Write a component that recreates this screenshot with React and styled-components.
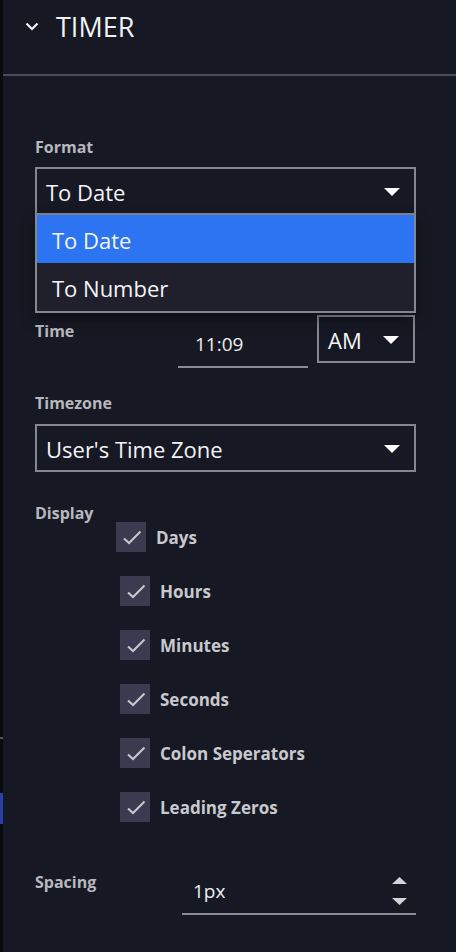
import React from "react";
import styled, { createGlobalStyle } from "styled-components";

const GlobalStyle = createGlobalStyle`
  html, body {
    margin: 0;
    padding: 0;
    background: #161823;
  }

  body {
    font-family: "Open Sans", "Noto Sans", sans-serif;
    color: #f0f0f2;
  }
`;

const Page = styled.div`
  width: 456px;
  height: 952px;
  display: flex;
  overflow: hidden;
  background: #161823;
`;

const Rail = styled.div`
  width: 3px;
  flex-shrink: 0;
  display: flex;
  flex-direction: column;
  background: #0a0b0e;
`;

const RailMark = styled.div`
  height: ${(props) => props.$h}px;
  background: ${(props) => props.$c || "transparent"};
`;

const Panel = styled.div`
  flex: 1;
  display: flex;
  flex-direction: column;
`;

const Header = styled.div`
  height: 52px;
  display: flex;
  align-items: center;
  gap: 17px;
  padding-left: 22px;
`;

const Title = styled.h2`
  margin: 0;
  font-size: 27px;
  font-weight: 400;
  color: #f2f2f4;
  line-height: 1;
`;

const Divider = styled.div`
  height: 2px;
  margin-top: 22px;
  background: #4a4b57;
`;

const Body = styled.div`
  display: flex;
  flex-direction: column;
  padding: 0 41px 0 32px;
`;

const Field = styled.div`
  display: flex;
  flex-direction: column;
  margin-top: ${(props) => props.$top}px;
`;

const Row = styled.div`
  display: flex;
  align-items: flex-start;
  margin-top: ${(props) => props.$top}px;
`;

const Label = styled.div`
  font-size: 16px;
  font-weight: 700;
  line-height: 20px;
  color: #b7b8be;
  width: ${(props) => props.$width || "auto"};
  padding-top: ${(props) => props.$pad || 0}px;
  flex-shrink: 0;
`;

const SelectWrap = styled.div`
  position: relative;
  margin-top: ${(props) => props.$top || 0}px;
  margin-left: ${(props) => props.$left || 0}px;
  width: ${(props) => props.$width || "100%"};
  flex-shrink: 0;
`;

const SelectBox = styled.div`
  box-sizing: border-box;
  height: 48px;
  border: 2px solid #85868f;
  display: flex;
  align-items: center;
  justify-content: space-between;
  padding: 2px 14px 0 9px;
  font-size: 22px;
  color: #f4f4f6;
`;

const Menu = styled.div`
  position: absolute;
  top: 100%;
  left: 0;
  right: 0;
  border: 2px solid #85868f;
  border-top: none;
  background: #1f202c;
  box-shadow: 0 6px 14px rgba(0, 0, 0, 0.35);
  z-index: 2;
`;

const Option = styled.div`
  height: 48px;
  display: flex;
  align-items: center;
  padding: 2px 0 0 15px;
  box-sizing: border-box;
  font-size: 22px;
  color: #f4f4f6;
  background: ${(props) => (props.$active ? "#2c74f2" : "#1f202c")};
`;

const LineInput = styled.div`
  box-sizing: border-box;
  height: 53px;
  width: ${(props) => props.$width};
  border-bottom: 2px solid #8a8b94;
  display: flex;
  align-items: center;
  padding: 6px 9px 0 ${(props) => props.$pad}px;
  font-size: 19px;
  color: #eeeef0;
  flex-shrink: 0;
`;

const InputText = styled.span`
  flex: 1;
`;

const Stepper = styled.div`
  display: flex;
  flex-direction: column;
  gap: 14px;
`;

const CheckList = styled.div`
  display: flex;
  flex-direction: column;
  gap: 24px;
  padding-top: 19px;
`;

const CheckItem = styled.div`
  display: flex;
  align-items: center;
  gap: 10px;
  margin-left: ${(props) => props.$shift || 0}px;
`;

const CheckBox = styled.div`
  width: 30px;
  height: 30px;
  background: #3a3b50;
  display: flex;
  align-items: center;
  justify-content: center;
`;

const CheckText = styled.span`
  font-size: 17px;
  font-weight: 700;
  color: #c8c8cd;
`;

const Caret = ({ up, color = "#ffffff", w = 16, h = 8 }) => (
  <svg width={w} height={h} viewBox={`0 0 ${w} ${h}`}>
    {up ? (
      <polygon points={`0,${h} ${w},${h} ${w / 2},0`} fill={color} />
    ) : (
      <polygon points={`0,0 ${w},0 ${w / 2},${h}`} fill={color} />
    )}
  </svg>
);

const Chevron = () => (
  <svg width="14" height="9" viewBox="0 0 14 9">
    <polyline
      points="1.5,1.5 7,7 12.5,1.5"
      fill="none"
      stroke="#f2f2f4"
      strokeWidth="2.2"
    />
  </svg>
);

const Check = () => (
  <svg width="30" height="30" viewBox="0 0 30 30">
    <polyline
      points="8,16.5 13,21 24.5,9.5"
      fill="none"
      stroke="#c8c8d0"
      strokeWidth="2"
    />
  </svg>
);

const displayOptions = [
  "Days",
  "Hours",
  "Minutes",
  "Seconds",
  "Colon Seperators",
  "Leading Zeros",
];

const App = () => {
  return (
    <Page>
      <GlobalStyle />
      <Rail>
        <RailMark $h={737} />
        <RailMark $h={2} $c="#55565e" />
        <RailMark $h={54} />
        <RailMark $h={31} $c="#2b3fa6" />
      </Rail>

      <Panel>
        <Header>
          <Chevron />
          <Title>TIMER</Title>
        </Header>
        <Divider />

        <Body>
          <Field $top={61}>
            <Label>Format</Label>
            <SelectWrap $top={10}>
              <SelectBox>
                <span>To Date</span>
                <Caret />
              </SelectBox>
              <Menu>
                <Option $active>To Date</Option>
                <Option>To Number</Option>
              </Menu>
            </SelectWrap>
          </Field>

          <Row $top={100}>
            <Label $width="143px" $pad={6}>
              Time
            </Label>
            <LineInput $width="130px" $pad={17}>
              <InputText>11:09</InputText>
            </LineInput>
            <SelectWrap $width="98px" $left={9}>
              <SelectBox>
                <span>AM</span>
                <Caret />
              </SelectBox>
            </SelectWrap>
          </Row>

          <Field $top={25}>
            <Label>Timezone</Label>
            <SelectWrap $top={11}>
              <SelectBox>
                <span>User's Time Zone</span>
                <Caret />
              </SelectBox>
            </SelectWrap>
          </Field>

          <Row $top={31}>
            <Label $width="85px">Display</Label>
            <CheckList>
              {displayOptions.map((name, i) => (
                <CheckItem key={name} $shift={i === 0 ? -4 : 0}>
                  <CheckBox>
                    <Check />
                  </CheckBox>
                  <CheckText>{name}</CheckText>
                </CheckItem>
              ))}
            </CheckList>
          </Row>

          <Row $top={40}>
            <Label $width="147px" $pad={10}>
              Spacing
            </Label>
            <LineInput $width="234px" $pad={11}>
              <InputText>1px</InputText>
              <Stepper>
                <Caret up color="#d4d4d8" w={15} h={7} />
                <Caret color="#d4d4d8" w={15} h={7} />
              </Stepper>
            </LineInput>
          </Row>
        </Body>
      </Panel>
    </Page>
  );
};

export default App;
